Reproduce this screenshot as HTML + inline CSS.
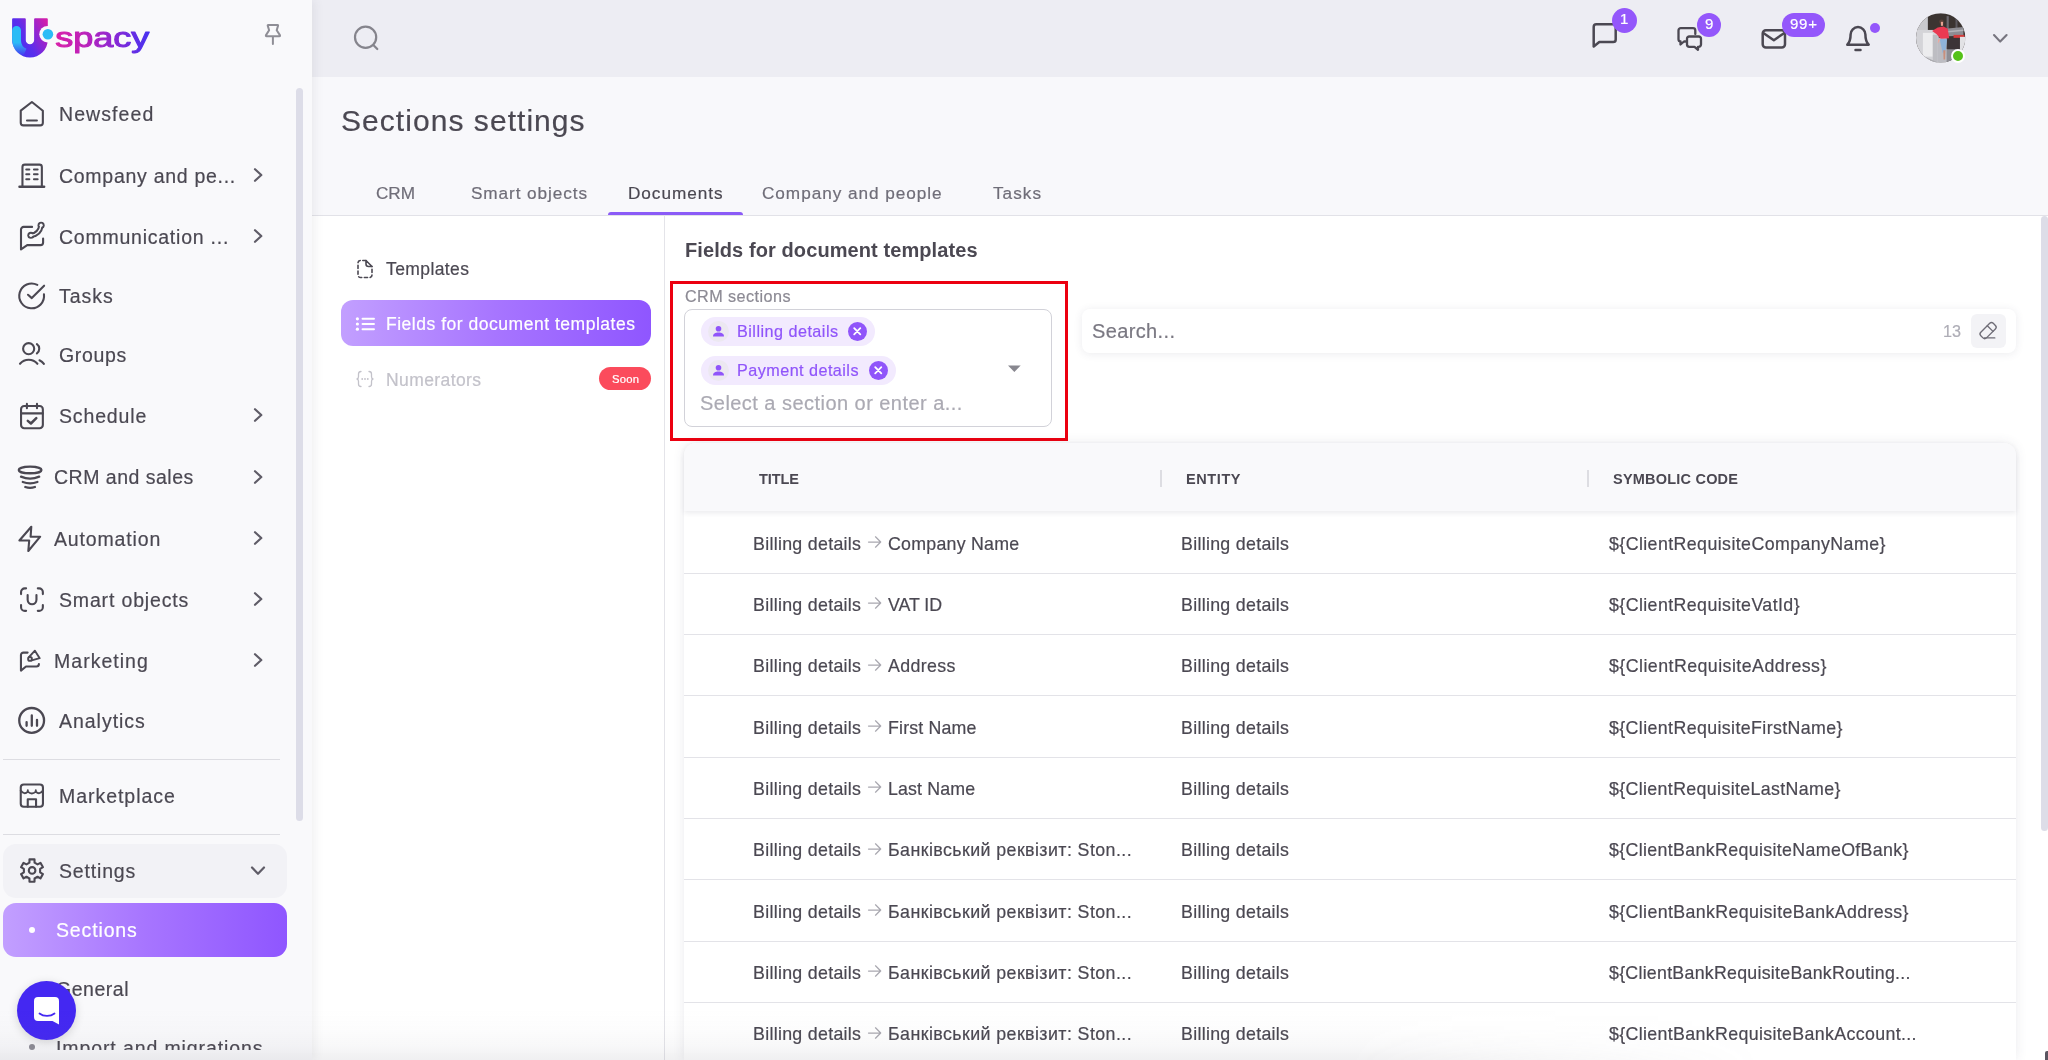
<!DOCTYPE html>
<html lang="en">
<head>
<meta charset="utf-8">
<title>Sections settings</title>
<style>
*{box-sizing:border-box;margin:0;padding:0}
html,body{width:2048px;height:1060px;overflow:hidden}
body{position:relative;background:#f8f8fb;color:#4b4852;font-family:"Liberation Sans",Arial,sans-serif;}
.t{position:absolute;white-space:nowrap;line-height:1;display:block;will-change:transform;-webkit-text-stroke:.2px currentColor}
.abs{position:absolute}
svg{position:absolute;overflow:visible}
.ic{fill:none;stroke:#4b4852;stroke-width:2.1;stroke-linecap:round;stroke-linejoin:round}
aside{position:absolute;left:0;top:0;width:312px;height:1060px;background:#f9f9fb;box-shadow:3px 0 9px rgba(75,75,90,.08);z-index:5;overflow:hidden}
header{position:absolute;left:312px;top:0;width:1736px;height:77px;background:#ededf3}
main{position:absolute;left:312px;top:77px;width:1736px;height:983px}
.panel{position:absolute;left:0;top:138px;width:1736px;height:845px;background:#fff;border-top:1px solid #e2e2e8}
.badge{position:absolute;background:#9457fb;border-radius:12px;height:24px}
.chip{position:absolute;height:29px;border-radius:15px;background:#f2eafe}
.row{position:absolute;left:372px;width:1332px;height:1px;background:#e6e6ea}
.grad{background:linear-gradient(90deg,#c29fff 0%,#a775ff 50%,#8f56ff 100%)}
</style>
</head>
<body>
<header>
<div class="abs" style="left:-312px;top:0"><svg class="ic"  style="left:350px;top:22px" width="32" height="32" viewBox="0 0 32 32" ><circle style="stroke:#85848c;stroke-width:2.2" cx="15.600" cy="15.200" r="10.600"/><path style="stroke:#85848c;stroke-width:2.2" d="M23.300 23 L27.300 27"/></svg>
<svg class="ic" style="left:1590px;top:20px" width="30" height="30" viewBox="0 0 30 30" ><path style="stroke-width:2.500" d="M6.300 4.300 H22.700 a2.600 2.600 0 0 1 3 2.600 V19.400 a2.600 2.600 0 0 1 -2.600 2.600 H9.300 L3.700 26.500 V6.900 a2.600 2.600 0 0 1 2.600 -2.600 Z"/></svg>
<div class="badge" style="left:1612px;top:8px;width:24.500px;height:24.500px;border-radius:13px"></div>
<svg class="ic" style="left:1676px;top:25px" width="28" height="28" viewBox="0 0 28 28" ><path style="stroke-width:2.300" d="M9.500 16.500 H8 L4.500 19.500 V16.500 a2.300 2.300 0 0 1 -2 -2.300 V5.500 a2.300 2.300 0 0 1 2.300 -2.300 H17 a2.300 2.300 0 0 1 2.300 2.300 V9"/><path style="stroke-width:2.300" d="M13.300 11.500 H22.700 a2.300 2.300 0 0 1 2.300 2.300 V19.500 a2.300 2.300 0 0 1 -2.300 2.300 H22 V24.800 L18.500 21.800 H13.300 a2.300 2.300 0 0 1 -2.300 -2.300 V13.800 a2.300 2.300 0 0 1 2.300 -2.300 Z"/></svg>
<div class="badge" style="left:1697px;top:13px;width:24px;height:24px"></div>
<svg class="ic" style="left:1760px;top:27px" width="28" height="24" viewBox="0 0 28 24" ><rect x="2.700" y="3.200" width="22.300" height="17.300" rx="3.200" style="stroke-width:2.500"/><path d="M3.700 6.200 L13.850 13.200 L24 6.200" style="stroke-width:2.500"/></svg>
<div class="badge" style="left:1782px;top:13px;width:43px;height:24px"></div>
<svg class="ic" style="left:1844px;top:24px" width="28" height="30" viewBox="0 0 28 30" ><path d="M3.300 20.700 c2.500 -2.500 3.300 -5 3.300 -10.200 a7.400 7.400 0 0 1 14.800 0 c0 5.200 .8 7.700 3.300 10.200 Z" style="stroke-width:2.500"/><path d="M11.500 26 H16.500" style="stroke-width:2.500"/></svg>
<div class="abs" style="left:1870px;top:22.500px;width:10px;height:10px;border-radius:5px;background:#9457fb"></div>
<svg style="left:1915.5px;top:13px" width="49.4" height="49.7" viewBox="0 0 50 50"><defs><clipPath id="av"><circle cx="25" cy="25" r="25"/></clipPath></defs>
<g clip-path="url(#av)"><rect width="50" height="50" fill="#3b3431"/>
<rect x="0" y="0" width="12" height="20" fill="#c9c9cd"/>
<rect x="0" y="17" width="23" height="33" fill="#d4d4d8"/><rect x="7" y="20" width="10" height="24" fill="#ececee"/><rect x="17" y="22" width="5" height="28" fill="#bdbdc2"/>
<path d="M0 40 L22 50 H0 Z" fill="#a9a9ae"/><rect x="22" y="25" width="9.500" height="25" fill="#bcbcc2"/>
<rect x="31" y="3" width="2.200" height="14" fill="#6d6a70"/><rect x="40" y="5" width="2" height="12" fill="#5d5a60"/>
<path d="M32 15.500 L48 14 V23 L32 23.500 Z" fill="#8d8d93"/><path d="M32 18 L48 16.500 V18 L32 19.500 Z" fill="#b4b4b9"/>
<rect x="38" y="22" width="11" height="3" fill="#d43b3b"/>
<rect x="31" y="25.500" width="14" height="11" fill="#3c3437"/><rect x="44.500" y="24" width="6" height="26" fill="#e2e2e5"/>
<path d="M31 36.500 H45 V50 H31 Z" fill="#8e8e95"/>
<circle cx="25.800" cy="8.800" r="2.300" fill="#5b4038"/><rect x="25.200" y="8.800" width="2.200" height="4" fill="#e8a191"/>
<path d="M16.300 18 L22 14.500 L27.900 13.400 L32.200 15.900 L33.600 25.300 L25 26 L20.600 21 Z" fill="#ea3a52"/>
<path d="M23.900 26 L31.500 26.400 L30 37.600 L27.100 40.500 Z" fill="#8fb3d9"/>
<path d="M27.600 37.600 L29.800 37.600 L29.500 47 L27.900 47 Z" fill="#c98f7c"/>
<path d="M22.500 27 L25 26 L22 31 Z" fill="#f0a79a"/>
</g></svg>
<div class="abs" style="left:1950.7px;top:48.7px;width:14.2px;height:14.2px;border-radius:8px;background:#55c219;border:2px solid #fff"></div>
<svg class="ic" style="left:1991px;top:30px" width="18" height="16" viewBox="0 0 18 16" ><path style="stroke:#77757f;stroke-width:2.100" d="M3 5 L9.2 11.600 L15.600 5"/></svg></div>
</header>
<main>
<div class="panel"></div>
<div class="abs" style="left:-312px;top:-77px"><div class="abs" style="left:608px;top:211.500px;width:134.500px;height:3.500px;border-radius:3px 3px 0 0;background:#8b5bf7"></div>
<div class="abs" style="left:664px;top:216px;width:1px;height:844px;background:#e4e4e9"></div>
<div class="abs grad" style="left:341px;top:300.200px;width:310px;height:45.600px;border-radius:12px"></div>
<svg class="ic" style="left:355px;top:258px" width="20" height="22" viewBox="0 0 20 22" ><path d="M11 2.500 H5.500 a2.500 2.500 0 0 0 -2.500 2.500 V17 a2.500 2.500 0 0 0 2.500 2.500 H14.500 a2.500 2.500 0 0 0 2.500 -2.500 V8.500" style="stroke-width:1.600;stroke-dasharray:3.200 2.600"/><path d="M11 2.500 V6 a2.500 2.500 0 0 0 2.500 2.500 H17 Z" style="stroke-width:1.600"/></svg>
<svg class="ic" style="left:355px;top:314px" width="22" height="20" viewBox="0 0 22 20" ><path d="M7.500 4.800 H19 M7.500 10 H19 M7.500 15.200 H19" style="stroke:#fff;stroke-width:1.900"/><circle cx="2.400" cy="4.800" r="1.600" style="fill:#fff;stroke:none"/><circle cx="2.400" cy="10" r="1.600" style="fill:#fff;stroke:none"/><circle cx="2.400" cy="15.200" r="1.600" style="fill:#fff;stroke:none"/></svg>
<svg class="ic" style="left:356px;top:369.5px" width="20" height="18" viewBox="0 0 20 18" ><path d="M5 1.500 c-2 0 -2.500 1 -2.500 2.500 v2.500 c0 1.500 -.5 2.300 -1.500 2.500 c1 .2 1.500 1 1.500 2.500 v2.500 c0 1.500 .5 2.500 2.500 2.500 M13 1.500 c2 0 2.500 1 2.500 2.500 v2.500 c0 1.500 .5 2.300 1.500 2.500 c-1 .2 -1.500 1 -1.500 2.500 v2.500 c0 1.500 -.5 2.500 -2.500 2.500" style="stroke:#c3c2ca;stroke-width:1.300"/><circle cx="6.200" cy="9" r=".9" style="fill:#c3c2ca;stroke:none"/><circle cx="9" cy="9" r=".9" style="fill:#c3c2ca;stroke:none"/><circle cx="11.800" cy="9" r=".9" style="fill:#c3c2ca;stroke:none"/></svg>
<div class="abs" style="left:599px;top:366.800px;width:52px;height:23px;border-radius:12px;background:#fb4b5c"></div>
<div class="abs" style="left:669.8px;top:281.2px;width:398.4px;height:160.3px;border:3.4px solid #ec0010"></div>
<div class="abs" style="left:684px;top:309px;width:368px;height:117.500px;border:1px solid #d2d2d9;border-radius:8px;background:#fff"></div>
<div class="chip" style="left:701px;top:316.5px;width:173.5px"></div><div class="abs" style="left:710px;top:322.5px;width:21px;height:21px;border-radius:11px;background:#ece8f1;margin:-2px 0 0 -2px"></div><svg class="ic" style="left:710px;top:322.5px" width="17" height="17" viewBox="0 0 17 17" ><circle cx="8.500" cy="5.800" r="2.800" style="fill:#9055fa;stroke:none"/><path d="M3 13.400 c0 -3 2.400 -4 5.500 -4 s5.500 1 5.500 4 Z" style="fill:#9055fa;stroke:none"/></svg><div class="abs" style="left:848.3px;top:322.0px;width:18.500px;height:18.500px;border-radius:10px;background:#9055fa"></div><svg class="ic" style="left:848.3px;top:322.0px" width="18.5" height="18.5" viewBox="0 0 18.5 18.5" ><path d="M6.200 6.200 L12.300 12.300 M12.300 6.200 L6.200 12.300" style="stroke:#fff;stroke-width:1.800"/></svg>
<div class="chip" style="left:701px;top:355.8px;width:194.5px"></div><div class="abs" style="left:710px;top:361.8px;width:21px;height:21px;border-radius:11px;background:#ece8f1;margin:-2px 0 0 -2px"></div><svg class="ic" style="left:710px;top:361.8px" width="17" height="17" viewBox="0 0 17 17" ><circle cx="8.500" cy="5.800" r="2.800" style="fill:#9055fa;stroke:none"/><path d="M3 13.400 c0 -3 2.400 -4 5.500 -4 s5.500 1 5.500 4 Z" style="fill:#9055fa;stroke:none"/></svg><div class="abs" style="left:869px;top:361.3px;width:18.500px;height:18.500px;border-radius:10px;background:#9055fa"></div><svg class="ic" style="left:869px;top:361.3px" width="18.5" height="18.5" viewBox="0 0 18.5 18.5" ><path d="M6.200 6.200 L12.300 12.300 M12.300 6.200 L6.200 12.300" style="stroke:#fff;stroke-width:1.800"/></svg>
<svg class="ic" style="left:1007px;top:364px" width="15" height="10" viewBox="0 0 15 10" ><path d="M1 1.500 H13.700 L7.350 8 Z" style="fill:#88878f;stroke:none"/></svg>
<div class="abs" style="left:1081.700px;top:308.600px;width:934.300px;height:44.400px;border-radius:8px;background:#fff;box-shadow:0 1px 8px rgba(60,60,90,.10)"></div>
<div class="abs" style="left:1971px;top:314px;width:34.500px;height:33.500px;border-radius:6px;background:#f3f3f6"></div>
<svg class="ic" style="left:1978px;top:320.5px" width="21" height="21" viewBox="0 0 21 21" ><g transform="translate(10.1,9.6) rotate(-45)" style="stroke:#6f6d77;stroke-width:1.35"><rect x="-8.8" y="-4" width="17.6" height="8" rx="2.5"/><path d="M2.9 -4 V4"/></g><path d="M6.2 16.9 H16.8" style="stroke:#6f6d77;stroke-width:1.35"/></svg>
<div class="abs" style="left:684px;top:443px;width:1332px;height:617px;border-radius:12px 12px 0 0;background:#fff;box-shadow:0 0 12px rgba(60,60,90,.10)"></div>
<div class="abs" style="left:684px;top:443px;width:1332px;height:68px;border-radius:12px 12px 0 0;background:#f9f9fb;box-shadow:0 2px 5px rgba(60,60,90,.10)"></div>
<div class="abs" style="left:1160px;top:470px;width:2px;height:17px;background:#dddde2"></div>
<div class="abs" style="left:1587px;top:470px;width:2px;height:17px;background:#dddde2"></div>
<div class="abs" style="left:684px;top:573px;width:1332px;height:1px;background:#e3e3e8"></div>
<div class="abs" style="left:684px;top:634px;width:1332px;height:1px;background:#e3e3e8"></div>
<div class="abs" style="left:684px;top:695px;width:1332px;height:1px;background:#e3e3e8"></div>
<div class="abs" style="left:684px;top:757px;width:1332px;height:1px;background:#e3e3e8"></div>
<div class="abs" style="left:684px;top:818px;width:1332px;height:1px;background:#e3e3e8"></div>
<div class="abs" style="left:684px;top:879px;width:1332px;height:1px;background:#e3e3e8"></div>
<div class="abs" style="left:684px;top:941px;width:1332px;height:1px;background:#e3e3e8"></div>
<div class="abs" style="left:684px;top:1002px;width:1332px;height:1px;background:#e3e3e8"></div>
<svg class="ic" style="left:866.8px;top:534.9499999999999px" width="16" height="14" viewBox="0 0 16 14" ><path d="M1.500 7 H13.500 M8.500 1.800 L13.700 7 L8.500 12.200" style="stroke:#a9a8b0;stroke-width:1.250"/></svg>
<svg class="ic" style="left:866.8px;top:596.3px" width="16" height="14" viewBox="0 0 16 14" ><path d="M1.500 7 H13.500 M8.500 1.800 L13.700 7 L8.500 12.200" style="stroke:#a9a8b0;stroke-width:1.250"/></svg>
<svg class="ic" style="left:866.8px;top:657.65px" width="16" height="14" viewBox="0 0 16 14" ><path d="M1.500 7 H13.500 M8.500 1.800 L13.700 7 L8.500 12.200" style="stroke:#a9a8b0;stroke-width:1.250"/></svg>
<svg class="ic" style="left:866.8px;top:719.0px" width="16" height="14" viewBox="0 0 16 14" ><path d="M1.500 7 H13.500 M8.500 1.800 L13.700 7 L8.500 12.200" style="stroke:#a9a8b0;stroke-width:1.250"/></svg>
<svg class="ic" style="left:866.8px;top:780.35px" width="16" height="14" viewBox="0 0 16 14" ><path d="M1.500 7 H13.500 M8.500 1.800 L13.700 7 L8.500 12.200" style="stroke:#a9a8b0;stroke-width:1.250"/></svg>
<svg class="ic" style="left:866.8px;top:841.6999999999999px" width="16" height="14" viewBox="0 0 16 14" ><path d="M1.500 7 H13.500 M8.500 1.800 L13.700 7 L8.500 12.200" style="stroke:#a9a8b0;stroke-width:1.250"/></svg>
<svg class="ic" style="left:866.8px;top:903.05px" width="16" height="14" viewBox="0 0 16 14" ><path d="M1.500 7 H13.500 M8.500 1.800 L13.700 7 L8.500 12.200" style="stroke:#a9a8b0;stroke-width:1.250"/></svg>
<svg class="ic" style="left:866.8px;top:964.4px" width="16" height="14" viewBox="0 0 16 14" ><path d="M1.500 7 H13.500 M8.500 1.800 L13.700 7 L8.500 12.200" style="stroke:#a9a8b0;stroke-width:1.250"/></svg>
<svg class="ic" style="left:866.8px;top:1025.75px" width="16" height="14" viewBox="0 0 16 14" ><path d="M1.500 7 H13.500 M8.500 1.800 L13.700 7 L8.500 12.200" style="stroke:#a9a8b0;stroke-width:1.250"/></svg>
<div class="abs" style="left:2041px;top:216px;width:7px;height:615px;border-radius:4px;background:#dddde8"></div></div>
</main>
<aside>
<svg style="left:10px;top:14px;will-change:transform" width="150" height="48" viewBox="10 14 150 48">
<defs>
<linearGradient id="lgU" x1="0" y1=".75" x2="1" y2=".15"><stop offset="0" stop-color="#3f33f3"/><stop offset=".4" stop-color="#5b2eec"/><stop offset=".72" stop-color="#9a24cc"/><stop offset="1" stop-color="#d21fab"/></linearGradient>
<linearGradient id="lgT" x1="0" y1="0" x2="1" y2="0"><stop offset="0" stop-color="#d81fa8"/><stop offset=".3" stop-color="#bd21b9"/><stop offset=".6" stop-color="#8e27d2"/><stop offset="1" stop-color="#4431f2"/></linearGradient>
<linearGradient id="lgC" x1="0" y1="0" x2="0" y2="1"><stop offset="0" stop-color="#2bbcf6"/><stop offset=".55" stop-color="#2bbcf6"/><stop offset="1" stop-color="#2bbcf6" stop-opacity="0"/></linearGradient>
</defs>
<path d="M13.1 18.2 H24.8 a1 1 0 0 1 1 1 V40.15 a4.15 4.15 0 0 0 8.3 0 V19.2 a1 1 0 0 1 1 -1 H46.8 a1 1 0 0 1 1 1 V39.75 a17.85 17.85 0 0 1 -35.7 0 V19.2 a1 1 0 0 1 1 -1 Z" fill="url(#lgU)"/>
<path d="M12.1 30.4 a4.45 4.45 0 0 1 8.9 0 V40.5 a9.2 9.2 0 0 0 5.5 8.3 L23.2 56.2 a17.85 17.85 0 0 1 -11.1 -16.45 Z" fill="url(#lgC)"/>
<circle cx="47.6" cy="34.2" r="8.3" fill="#f9f9fb"/>
<circle cx="47.9" cy="34.2" r="5.3" fill="#2bbcf6"/>
<text x="55.2" y="47.2" font-family="'Liberation Sans',Arial,sans-serif" font-size="28.4" textLength="94.2" lengthAdjust="spacingAndGlyphs" fill="url(#lgT)" stroke="url(#lgT)" stroke-width="1.05" stroke-linejoin="round">spacy</text>
</svg>
<svg class="ic" style="left:263px;top:22px" width="20" height="24" viewBox="0 0 20 24" ><path style="stroke:#8f8e96;stroke-width:2" d="M5.2 3 H14.6 Q15.3 3 15 3.9 L13.7 8.2 L16.9 13.1 Q17.4 14.2 16.3 14.2 H3.5 Q2.5 14.2 3 13.1 L6.1 8.2 L4.8 3.9 Q4.5 3 5.2 3 Z M9.9 14.2 V22.1"/></svg>
<div class="abs" style="left:296px;top:87.5px;width:7px;height:733px;border-radius:4px;background:#dddde8"></div>
<div class="abs" style="left:2.5px;top:759px;width:277px;height:1px;background:#dddde2"></div>
<div class="abs" style="left:2.5px;top:834px;width:277px;height:1px;background:#dddde2"></div>
<div class="abs" style="left:2.5px;top:844px;width:284.5px;height:53.5px;border-radius:13px;background:#f2f2f6"></div>
<div class="abs grad" style="left:2.5px;top:902.5px;width:284.5px;height:54px;border-radius:13px"></div>
<div class="abs" style="left:29px;top:927px;width:6px;height:6px;border-radius:3px;background:#fff"></div>
<div class="abs" style="left:29px;top:986px;width:6px;height:6px;border-radius:3px;background:#8d8c95"></div>
<div class="abs" style="left:29px;top:1044px;width:6px;height:6px;border-radius:3px;background:#8d8c95"></div>
<svg class="ic" style="left:252px;top:167.0px" width="12" height="16" viewBox="0 0 12 16" ><path d="M3 2.2 L9.3 8 L3 13.8" style="stroke:#5f5c67;stroke-width:2.2"/></svg>
<svg class="ic" style="left:252px;top:228.0px" width="12" height="16" viewBox="0 0 12 16" ><path d="M3 2.2 L9.3 8 L3 13.8" style="stroke:#5f5c67;stroke-width:2.2"/></svg>
<svg class="ic" style="left:252px;top:407.4px" width="12" height="16" viewBox="0 0 12 16" ><path d="M3 2.2 L9.3 8 L3 13.8" style="stroke:#5f5c67;stroke-width:2.2"/></svg>
<svg class="ic" style="left:252px;top:468.9px" width="12" height="16" viewBox="0 0 12 16" ><path d="M3 2.2 L9.3 8 L3 13.8" style="stroke:#5f5c67;stroke-width:2.2"/></svg>
<svg class="ic" style="left:252px;top:530.4px" width="12" height="16" viewBox="0 0 12 16" ><path d="M3 2.2 L9.3 8 L3 13.8" style="stroke:#5f5c67;stroke-width:2.2"/></svg>
<svg class="ic" style="left:252px;top:591.4px" width="12" height="16" viewBox="0 0 12 16" ><path d="M3 2.2 L9.3 8 L3 13.8" style="stroke:#5f5c67;stroke-width:2.2"/></svg>
<svg class="ic" style="left:252px;top:652.4px" width="12" height="16" viewBox="0 0 12 16" ><path d="M3 2.2 L9.3 8 L3 13.8" style="stroke:#5f5c67;stroke-width:2.2"/></svg>
<svg class="ic" style="left:250px;top:864px" width="16" height="14" viewBox="0 0 16 14" ><path d="M2 3.5 L8 9.8 L14 3.5" style="stroke:#5f5c67;stroke-width:2.2"/></svg>
<svg class="ic" style="left:16px;top:97.5px" width="32" height="32" viewBox="0 0 32 32" ><path d="M4.75 12.7 L15.9 4.0 L26.85 12.7 V24.75 a2.6 2.6 0 0 1 -2.6 2.6 H7.35 a2.6 2.6 0 0 1 -2.6 -2.6 Z"/><path d="M11 22.5 H20.9"/></svg>
<svg class="ic" style="left:16px;top:159.5px" width="32" height="32" viewBox="0 0 32 32" ><path d="M6.45 26.6 V7.05 a2.4 2.4 0 0 1 2.4 -2.4 H23.45 a2.4 2.4 0 0 1 2.4 2.4 V26.6"/><path d="M3.45 26.8 H28.15" style="stroke-width:2.4"/><path d="M10.2 9.5 h3.2 M17.9 9.5 h3.8 M10.2 14.3 h3.2 M17.9 14.3 h3.8 M10.2 19.3 h3.2 M17.9 19.3 h3.8" style="stroke-width:1.9"/></svg>
<svg class="ic" style="left:16px;top:221px" width="32" height="32" viewBox="0 0 32 32" ><path d="M16.1 5.9 H7.6 a2.6 2.6 0 0 0 -2.6 2.6 V28.4 L11.2 24.1 H24.5 a2.6 2.6 0 0 0 2.6 -2.6 V17.6"/><path d="M14.8 14.4 Q23.6 13.6 25.2 4" style="stroke-width:5.4"/><circle cx="14.9" cy="14.3" r="3.55" style="fill:#4b4852;stroke:none"/><circle cx="25.1" cy="4.2" r="3.55" style="fill:#4b4852;stroke:none"/><path d="M14.8 14.4 Q23.6 13.6 25.2 4" style="stroke:#f9f9fb;stroke-width:1.5"/><circle cx="14.9" cy="14.3" r="1.6" style="fill:#f9f9fb;stroke:none"/><circle cx="25.1" cy="4.2" r="1.6" style="fill:#f9f9fb;stroke:none"/></svg>
<svg class="ic" style="left:16px;top:279.5px" width="32" height="32" viewBox="0 0 32 32" ><path d="M27.96 14.39 A12.4 12.4 0 1 1 21.32 4.87"/><path d="M12 14.8 L15.8 18.1 L28.1 5.7"/></svg>
<svg class="ic" style="left:16px;top:339px" width="32" height="32" viewBox="0 0 32 32" ><circle cx="12.65" cy="9.7" r="5.55"/><path d="M4 24.8 A11.5 11.5 0 0 1 21.4 24.8"/><path d="M20.9 5.2 A5.58 5.58 0 0 1 20.9 14.3"/><path d="M23.5 21.3 Q26.3 22.6 27.9 24.9"/></svg>
<svg class="ic" style="left:16px;top:399.5px" width="32" height="32" viewBox="0 0 32 32" ><rect x="5.05" y="5.95" width="21.8" height="22.3" rx="3.2"/><path d="M5.05 13.4 H26.85 M10.9 3.9 V8.2 M21 3.9 V8.2"/><path d="M11.8 20.9 L14.9 23.5 L20.3 18.1" style="stroke-width:2.5"/></svg>
<svg class="ic" style="left:13.5px;top:461.5px" width="32" height="32" viewBox="0 0 32 32" ><ellipse cx="16.1" cy="7.9" rx="11.35" ry="3.35" style="stroke-width:2.3"/><path d="M7 14.6 Q16.1 18.6 25.2 14.6 M8.8 20 Q16.1 22.6 23.4 20 M11.3 25 Q16.1 26.6 20.9 25" style="stroke-width:2.3"/></svg>
<svg class="ic" style="left:13.5px;top:522.5px" width="32" height="32" viewBox="0 0 32 32" ><path d="M17.3 3.7 L5.4 17.5 H15.2 L14.3 28 L26.2 13.7 H16.6 Z"/></svg>
<svg class="ic" style="left:16px;top:584px" width="32" height="32" viewBox="0 0 32 32" ><path d="M5.05 10.1 V8.05 a3.7 3.7 0 0 1 3.7 -3.7 H10.1 M21.8 4.35 H23.15 a3.7 3.7 0 0 1 3.7 3.7 V10.1 M26.85 21.1 V23.15 a3.7 3.7 0 0 1 -3.7 3.7 H21.8 M10.1 26.85 H8.75 a3.7 3.7 0 0 1 -3.7 -3.7 V21.1"/><path d="M11.65 11 V15.85 a4.4 4.4 0 0 0 8.8 0 V11"/></svg>
<svg class="ic" style="left:13.5px;top:645.5px" width="32" height="32" viewBox="0 0 32 32" ><path d="M13.6 6.6 H9.45 a2.5 2.5 0 0 0 -2.5 2.5 V24.6 L12 20.5 H22.4 a2.5 2.5 0 0 0 2.5 -2.5 V18"/><path d="M14.9 11.2 L20.9 4.7 L25.7 12.2 L17.7 14.3" style="stroke-width:1.9"/><circle cx="16" cy="12.9" r="1.9" style="stroke-width:1.9"/></svg>
<svg class="ic" style="left:16px;top:705px" width="32" height="32" viewBox="0 0 32 32" ><circle cx="15.65" cy="15.4" r="12.4" style="stroke-width:2.3"/><path d="M10.6 17.1 V20.8 M15.8 10.5 V20.8 M21 14.8 V20.8" style="stroke-width:2.3"/></svg>
<svg class="ic" style="left:16px;top:780px" width="32" height="32" viewBox="0 0 32 32" ><rect x="4.75" y="4.55" width="22.2" height="22.2" rx="3"/><path d="M4.75 10.6 Q8.3 15.2 11.8 11.6 V10.2 M11.8 11.6 Q15.8 15.2 19.8 11.6 V10.2 M19.8 11.6 Q23.4 15.2 26.95 10.6" style="stroke-width:1.9"/><path d="M11.75 26.75 V19.25 H20.05 V26.75"/></svg>
<svg class="ic" style="left:16px;top:855px" width="32" height="32" viewBox="0 0 32 32" ><path d="M13.44 7.71 L13.49 4.38 L18.51 4.38 L18.56 7.71 L21.55 9.43 L24.47 7.82 L26.97 12.16 L24.12 13.87 L24.12 17.33 L26.97 19.04 L24.47 23.38 L21.55 21.77 L18.56 23.49 L18.51 26.82 L13.49 26.82 L13.44 23.49 L10.45 21.77 L7.53 23.38 L5.03 19.04 L7.88 17.33 L7.88 13.87 L5.03 12.16 L7.53 7.82 L10.45 9.43 Z"/><circle cx="16.1" cy="15.4" r="3.3"/></svg>
</aside>
<div id="overlay">
<span class="t" style="left:341.4px;top:106px;font-size:30px;letter-spacing:1.05px;">Sections settings</span>
<span class="t" style="left:376.0px;top:185px;font-size:17.2px;color:#6f6d78;letter-spacing:-0.08px;">CRM</span>
<span class="t" style="left:471.0px;top:185px;font-size:17.2px;color:#6f6d78;letter-spacing:0.91px;">Smart objects</span>
<span class="t" style="left:627.5px;top:185px;font-size:17.2px;letter-spacing:0.95px;">Documents</span>
<span class="t" style="left:762.0px;top:185px;font-size:17.2px;color:#6f6d78;letter-spacing:0.95px;">Company and people</span>
<span class="t" style="left:992.5px;top:185px;font-size:17.2px;color:#6f6d78;letter-spacing:1.02px;">Tasks</span>
<span class="t" style="left:386.0px;top:261px;font-size:17.5px;letter-spacing:0.40px;">Templates</span>
<span class="t" style="left:386.0px;top:316px;font-size:17.5px;color:#fff;letter-spacing:0.52px;">Fields for document templates</span>
<span class="t" style="left:386.0px;top:372px;font-size:17.5px;color:#c3c2ca;letter-spacing:0.40px;">Numerators</span>
<span class="t" style="left:611.5px;top:374px;font-size:11.3px;color:#fff;letter-spacing:0.20px;">Soon</span>
<span class="t" style="left:684.5px;top:240px;font-size:20px;font-weight:700;-webkit-text-stroke:0;letter-spacing:0.09px;">Fields for document templates</span>
<span class="t" style="left:684.5px;top:288px;font-size:16.2px;color:#8c8a94;letter-spacing:0.43px;">CRM sections</span>
<span class="t" style="left:737.0px;top:323px;font-size:16.2px;color:#9055fa;letter-spacing:0.47px;">Billing details</span>
<span class="t" style="left:737.0px;top:362px;font-size:16.2px;color:#9055fa;letter-spacing:0.45px;">Payment details</span>
<span class="t" style="left:700.0px;top:393px;font-size:20px;color:#abaab3;letter-spacing:0.46px;">Select a section or enter a...</span>
<span class="t" style="left:1092.0px;top:321px;font-size:20px;color:#7a7882;letter-spacing:0.37px;">Search...</span>
<span class="t" style="left:1943.0px;top:323px;font-size:16.2px;color:#aeadb6;">13</span>
<span class="t" style="left:758.5px;top:472px;font-size:14.5px;font-weight:700;-webkit-text-stroke:0;letter-spacing:-0.07px;">TITLE</span>
<span class="t" style="left:1185.5px;top:472px;font-size:14.5px;font-weight:700;-webkit-text-stroke:0;letter-spacing:0.59px;">ENTITY</span>
<span class="t" style="left:1613.0px;top:472px;font-size:14.5px;font-weight:700;-webkit-text-stroke:0;letter-spacing:0.21px;">SYMBOLIC CODE</span>
<span class="t" style="left:753.4px;top:536px;font-size:17.8px;letter-spacing:0.30px;">Billing details</span>
<span class="t" style="left:887.5px;top:536px;font-size:17.8px;letter-spacing:0.24px;">Company Name</span>
<span class="t" style="left:1181.0px;top:536px;font-size:17.8px;letter-spacing:0.30px;">Billing details</span>
<span class="t" style="left:1608.5px;top:536px;font-size:17.8px;letter-spacing:0.41px;">${ClientRequisiteCompanyName}</span>
<span class="t" style="left:753.4px;top:597px;font-size:17.8px;letter-spacing:0.30px;">Billing details</span>
<span class="t" style="left:887.5px;top:597px;font-size:17.8px;letter-spacing:-0.07px;">VAT ID</span>
<span class="t" style="left:1181.0px;top:597px;font-size:17.8px;letter-spacing:0.30px;">Billing details</span>
<span class="t" style="left:1608.5px;top:597px;font-size:17.8px;letter-spacing:0.41px;">${ClientRequisiteVatId}</span>
<span class="t" style="left:753.4px;top:658px;font-size:17.8px;letter-spacing:0.30px;">Billing details</span>
<span class="t" style="left:887.5px;top:658px;font-size:17.8px;letter-spacing:0.38px;">Address</span>
<span class="t" style="left:1181.0px;top:658px;font-size:17.8px;letter-spacing:0.30px;">Billing details</span>
<span class="t" style="left:1608.5px;top:658px;font-size:17.8px;letter-spacing:0.45px;">${ClientRequisiteAddress}</span>
<span class="t" style="left:753.4px;top:720px;font-size:17.8px;letter-spacing:0.30px;">Billing details</span>
<span class="t" style="left:887.5px;top:720px;font-size:17.8px;letter-spacing:0.17px;">First Name</span>
<span class="t" style="left:1181.0px;top:720px;font-size:17.8px;letter-spacing:0.30px;">Billing details</span>
<span class="t" style="left:1608.5px;top:720px;font-size:17.8px;letter-spacing:0.39px;">${ClientRequisiteFirstName}</span>
<span class="t" style="left:753.4px;top:781px;font-size:17.8px;letter-spacing:0.30px;">Billing details</span>
<span class="t" style="left:887.5px;top:781px;font-size:17.8px;letter-spacing:0.13px;">Last Name</span>
<span class="t" style="left:1181.0px;top:781px;font-size:17.8px;letter-spacing:0.30px;">Billing details</span>
<span class="t" style="left:1608.5px;top:781px;font-size:17.8px;letter-spacing:0.36px;">${ClientRequisiteLastName}</span>
<span class="t" style="left:753.4px;top:842px;font-size:17.8px;letter-spacing:0.30px;">Billing details</span>
<span class="t" style="left:887.5px;top:842px;font-size:17.8px;letter-spacing:0.43px;">Банківський реквізит: Ston...</span>
<span class="t" style="left:1181.0px;top:842px;font-size:17.8px;letter-spacing:0.30px;">Billing details</span>
<span class="t" style="left:1608.5px;top:842px;font-size:17.8px;letter-spacing:0.35px;">${ClientBankRequisiteNameOfBank}</span>
<span class="t" style="left:753.4px;top:904px;font-size:17.8px;letter-spacing:0.30px;">Billing details</span>
<span class="t" style="left:887.5px;top:904px;font-size:17.8px;letter-spacing:0.43px;">Банківський реквізит: Ston...</span>
<span class="t" style="left:1181.0px;top:904px;font-size:17.8px;letter-spacing:0.30px;">Billing details</span>
<span class="t" style="left:1608.5px;top:904px;font-size:17.8px;letter-spacing:0.37px;">${ClientBankRequisiteBankAddress}</span>
<span class="t" style="left:753.4px;top:965px;font-size:17.8px;letter-spacing:0.30px;">Billing details</span>
<span class="t" style="left:887.5px;top:965px;font-size:17.8px;letter-spacing:0.43px;">Банківський реквізит: Ston...</span>
<span class="t" style="left:1181.0px;top:965px;font-size:17.8px;letter-spacing:0.30px;">Billing details</span>
<span class="t" style="left:1608.5px;top:965px;font-size:17.8px;letter-spacing:0.26px;">${ClientBankRequisiteBankRouting...</span>
<span class="t" style="left:753.4px;top:1026px;font-size:17.8px;letter-spacing:0.30px;">Billing details</span>
<span class="t" style="left:887.5px;top:1026px;font-size:17.8px;letter-spacing:0.43px;">Банківський реквізит: Ston...</span>
<span class="t" style="left:1181.0px;top:1026px;font-size:17.8px;letter-spacing:0.30px;">Billing details</span>
<span class="t" style="left:1608.5px;top:1026px;font-size:17.8px;letter-spacing:0.35px;">${ClientBankRequisiteBankAccount...</span>
<span class="t" style="left:1620.3px;top:11px;font-size:15px;color:#fff;">1</span>
<span class="t" style="left:1704.8px;top:16px;font-size:15px;color:#fff;">9</span>
<span class="t" style="left:1789.5px;top:16px;font-size:15px;color:#fff;letter-spacing:0.77px;">99+</span>
</div>
<nav class="abs" style="left:0;top:0;width:312px;height:1050px;overflow:hidden;z-index:6">
<span class="t" style="left:58.7px;top:105px;font-size:19.5px;letter-spacing:1.08px;">Newsfeed</span>
<span class="t" style="left:58.7px;top:167px;font-size:19.5px;letter-spacing:0.72px;">Company and pe...</span>
<span class="t" style="left:58.7px;top:228px;font-size:19.5px;letter-spacing:0.76px;">Communication ...</span>
<span class="t" style="left:58.7px;top:287px;font-size:19.5px;letter-spacing:0.99px;">Tasks</span>
<span class="t" style="left:58.7px;top:346px;font-size:19.5px;letter-spacing:0.67px;">Groups</span>
<span class="t" style="left:58.7px;top:407px;font-size:19.5px;letter-spacing:0.85px;">Schedule</span>
<span class="t" style="left:53.7px;top:468px;font-size:19.5px;letter-spacing:0.50px;">CRM and sales</span>
<span class="t" style="left:53.7px;top:530px;font-size:19.5px;letter-spacing:0.85px;">Automation</span>
<span class="t" style="left:58.7px;top:591px;font-size:19.5px;letter-spacing:0.84px;">Smart objects</span>
<span class="t" style="left:53.7px;top:652px;font-size:19.5px;letter-spacing:1.02px;">Marketing</span>
<span class="t" style="left:58.7px;top:712px;font-size:19.5px;letter-spacing:0.97px;">Analytics</span>
<span class="t" style="left:58.7px;top:787px;font-size:19.5px;letter-spacing:0.96px;">Marketplace</span>
<span class="t" style="left:58.7px;top:862px;font-size:19.5px;letter-spacing:0.83px;">Settings</span>
<span class="t" style="left:56.2px;top:921px;font-size:19.5px;color:#fff;letter-spacing:0.86px;">Sections</span>
<span class="t" style="left:56.2px;top:980px;font-size:19.5px;letter-spacing:0.52px;">General</span>
<span class="t" style="left:56.2px;top:1039px;font-size:19.5px;letter-spacing:0.89px;">Import and migrations</span>
<div class="abs" style="left:17px;top:980.500px;width:59px;height:59px;border-radius:30px;background:#4428f2;box-shadow:0 2px 10px rgba(0,0,0,.15)"></div>
<svg class="" style="left:33px;top:996px" width="28" height="30" viewBox="0 0 28 30" ><path d="M5 1 H22 a4 4 0 0 1 4 4 V28.500 L19.500 25 H5 a4 4 0 0 1 -4 -4 V5 a4 4 0 0 1 4 -4 Z" fill="#fff" stroke="none"/><path d="M6.500 17.500 c4 3.200 11 3.200 15 0" fill="none" stroke="#4428f2" stroke-width="1.800" stroke-linecap="round"/></svg>
</nav>
<div class="abs" style="left:0;top:1008px;width:2048px;height:52px;background:linear-gradient(180deg,rgba(110,110,125,0) 0%,rgba(110,110,125,.015) 40%,rgba(110,110,125,.05) 75%,rgba(110,110,125,.11) 100%);-webkit-mask-image:linear-gradient(90deg,#000 0,#000 1350px,transparent 1760px);mask-image:linear-gradient(90deg,#000 0,#000 1350px,transparent 1760px);z-index:7"></div><div class="abs" style="left:2045px;top:1051px;width:3px;height:9px;background:#5a5560;border-radius:2px 0 0 0;z-index:8"></div>
</body>
</html>
